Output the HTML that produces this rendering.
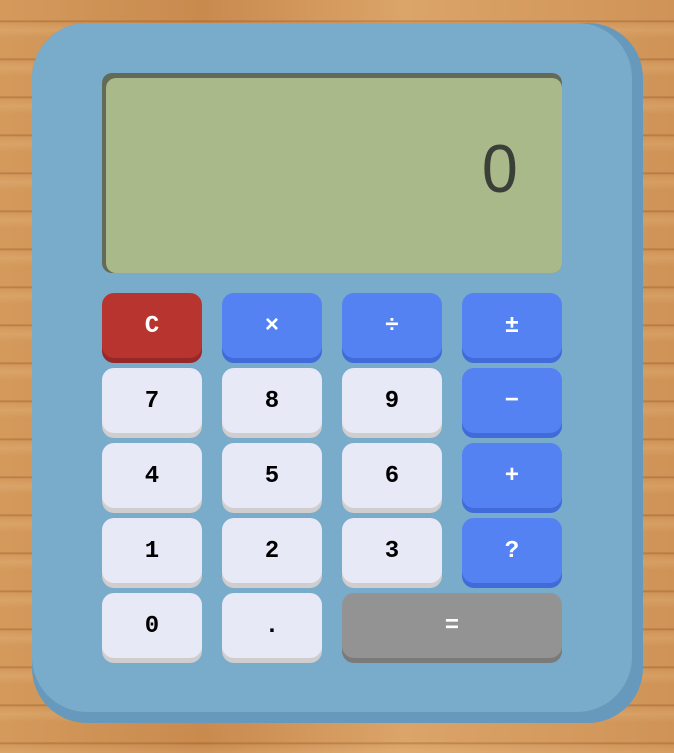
<!DOCTYPE html>
<html><head><style>
html,body{margin:0;padding:0;width:674px;height:753px;overflow:hidden}
body{background:#d29a5f;position:relative;
background-image:repeating-linear-gradient(180deg,rgba(120,60,20,0) 0px,rgba(120,60,20,0) 20px,rgba(120,60,20,.35) 21px,rgba(120,60,20,0) 23px,rgba(255,220,170,.15) 30px,rgba(120,60,20,0) 38px),linear-gradient(90deg,#d49a5c,#c98a4e 30%,#dba468 60%,#cf9357);}
.body{position:absolute;left:32px;top:23px;width:611px;height:700px;background:#6699bb;border-radius:55px}
.face{position:absolute;left:32px;top:23px;width:600px;height:689px;background:#79abcb;border-radius:55px}
.disp{position:absolute;left:102px;top:73px;width:460px;height:200px;background:#636b58;border-radius:10px}
.disp2{position:absolute;left:106px;top:78px;width:456px;height:195px;background:#aab98a;border-radius:10px}
.num{position:absolute;right:44px;top:52px;font:68px "Liberation Sans",sans-serif;color:#3a3f38;transform:scaleX(.95);transform-origin:right}
.b{position:absolute;width:100px;height:65px;border-radius:12px;font:bold 24px "Liberation Mono",monospace;text-align:center;line-height:67px;color:#000}
.w{background:#e8e9f6;box-shadow:0 5px 0 #cfcdcd}
.bl{background:#5482f2;box-shadow:0 5px 0 #406bd8;color:#fff}
.r{background:#b8352f;box-shadow:0 5px 0 #97282a;color:#fff}
.g{background:#939393;box-shadow:0 5px 0 #7a7a7a;color:#fff;width:220px}
</style></head><body>
<div class="body"></div><div class="face"></div>
<div class="disp"></div><div class="disp2"><div class="num">0</div></div>
<div class="b r" style="left:102px;top:293px">C</div>
<div class="b bl" style="left:222px;top:293px">×</div>
<div class="b bl" style="left:342px;top:293px">÷</div>
<div class="b bl" style="left:462px;top:293px">±</div>
<div class="b w" style="left:102px;top:368px">7</div>
<div class="b w" style="left:222px;top:368px">8</div>
<div class="b w" style="left:342px;top:368px">9</div>
<div class="b bl" style="left:462px;top:368px">−</div>
<div class="b w" style="left:102px;top:443px">4</div>
<div class="b w" style="left:222px;top:443px">5</div>
<div class="b w" style="left:342px;top:443px">6</div>
<div class="b bl" style="left:462px;top:443px">+</div>
<div class="b w" style="left:102px;top:518px">1</div>
<div class="b w" style="left:222px;top:518px">2</div>
<div class="b w" style="left:342px;top:518px">3</div>
<div class="b bl" style="left:462px;top:518px">?</div>
<div class="b w" style="left:102px;top:593px">0</div>
<div class="b w" style="left:222px;top:593px">.</div>
<div class="b g" style="left:342px;top:593px">=</div>
</body></html>
